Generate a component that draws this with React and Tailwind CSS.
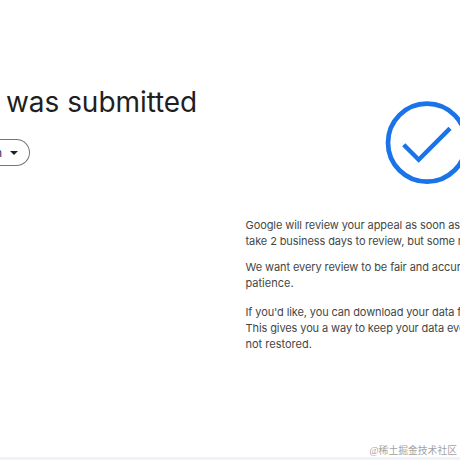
const PARAGRAPHS = [
  {
    id: 'review',
    className: 'mb-2.5',
    lines: [
      { text: 'Google will review your appeal as soon as', className: 'tracking-[-0.08px]' },
      { text: 'take 2 business days to review, but some m', className: 'tracking-[-0.1px]' },
    ],
  },
  {
    id: 'patience',
    className: 'mb-[13px]',
    lines: [
      { text: 'We want every review to be fair and accura', className: 'tracking-[-0.09px]' },
      { text: 'patience.', className: 'tracking-normal' },
    ],
  },
  {
    id: 'download',
    className: '',
    lines: [
      { text: "If you'd like, you can download your data f", className: 'tracking-[-0.11px]' },
      { text: 'This gives you a way to keep your data eve', className: 'tracking-[-0.1px]' },
      { text: 'not restored.', className: 'tracking-normal' },
    ],
  },
]

function LanguageButton() {
  return (
    <button
      type="button"
      className="mt-[18px] flex h-[27px] w-[30px] items-center rounded-r-full border border-l-0 border-[#747775] text-[12px] text-[#30305c]"
    >
      <span className="flex w-[2px] shrink-0 justify-end">n</span>
      <svg className="ml-2 shrink-0" width="8" height="4" viewBox="0 0 8 4" aria-hidden="true">
        <path d="M0 0h8L4 4z" fill="#1f1f1f" />
      </svg>
    </button>
  )
}

function SuccessIcon() {
  return (
    <svg className="ml-[140px] shrink-0" width="84" height="84" viewBox="0 0 84 84" fill="none" aria-hidden="true">
      <circle cx="42" cy="41.7" r="39" stroke="#1a73e8" strokeWidth="4.7" />
      <path d="M18.7 43.7L33.7 58.7L65 27.4" stroke="#1a73e8" strokeWidth="4.4" />
    </svg>
  )
}

export default function App() {
  return (
    <div className="relative flex h-[460px] w-[460px] flex-col overflow-hidden bg-white font-['Inter',sans-serif]">
      <main className="flex flex-1">
        <section className="w-[245px] shrink-0 pt-[84px]">
          <h1 className="pl-[6px] text-[28px] leading-[37px] tracking-[-0.04px] whitespace-nowrap text-[#1f1f1f]">
            was submi<span className="tracking-[-1px]">t</span>ted
          </h1>
          <LanguageButton />
        </section>

        <section className="flex flex-1 flex-col overflow-hidden pt-[101px]">
          <SuccessIcon />
          <div className="mt-8 pl-[0.5px] text-[11px] leading-4 whitespace-nowrap text-[#444746]">
            {PARAGRAPHS.map(paragraph => (
              <p key={paragraph.id} className={paragraph.className}>
                {paragraph.lines.map(line => (
                  <span key={line.text} className={`block ${line.className}`}>
                    {line.text}
                  </span>
                ))}
              </p>
            ))}
          </div>
        </section>
      </main>

      <footer className="h-[3px] bg-[#f0f2f7]" />

      {/* Watermark */}
      <div className="absolute right-[3px] bottom-[1px] font-['Liberation_Serif','Noto_Sans_CJK_SC',sans-serif] text-[9.8px] leading-4 whitespace-nowrap text-[#a3a3a3]">
        @稀土掘金技术社区
      </div>
    </div>
  )
}
